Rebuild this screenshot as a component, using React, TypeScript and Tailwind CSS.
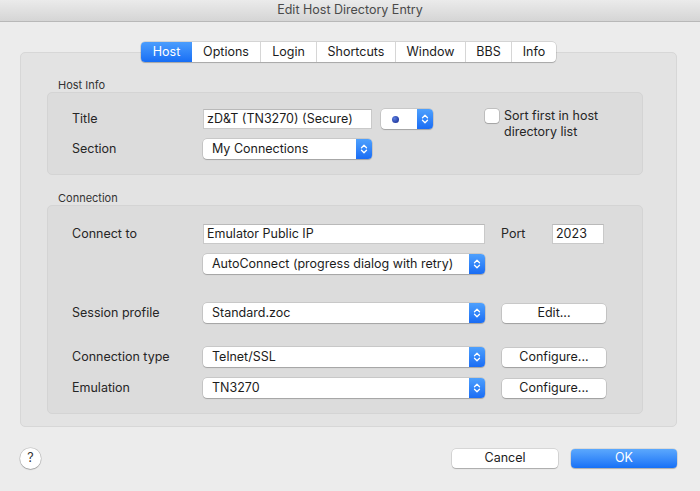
import React from 'react';

const FONT = { fontFamily: 'Inter, "Liberation Sans", Arial, sans-serif' };

const tabs = ['Host', 'Options', 'Login', 'Shortcuts', 'Window', 'BBS', 'Info'];
const tabWidths = ['w-[51px]', 'w-[68px]', 'w-[56px]', 'w-[79px]', 'w-[70px]', 'w-[46px]', 'w-[45px]'];

const Chevrons: React.FC = () => (
  <svg width="8" height="12" viewBox="0 0 8 12" fill="none">
    <path d="M1.5 4.8 L4 2.3 L6.5 4.8" stroke="white" strokeWidth="1.3" strokeLinecap="round" strokeLinejoin="round" />
    <path d="M1.5 7.2 L4 9.7 L6.5 7.2" stroke="white" strokeWidth="1.3" strokeLinecap="round" strokeLinejoin="round" />
  </svg>
);

const Popup: React.FC<{ value: string; width: string }> = ({ value, width }) => (
  <div
    className={`${width} h-[20px] flex bg-white rounded-[4px] shadow-[0_0_0_0.5px_rgba(0,0,0,0.18),0_1px_1px_rgba(0,0,0,0.18)] overflow-hidden`}
  >
    <div className="flex-1 flex items-center pl-[9px] text-[12.5px] text-[#1c1c1c] truncate">{value}</div>
    <div className="w-[16px] flex items-center justify-center bg-gradient-to-b from-[#4ea0fd] to-[#1a6cf4]">
      <Chevrons />
    </div>
  </div>
);

const TextField: React.FC<{ value: string; width: string }> = ({ value, width }) => (
  <div
    className={`${width} h-[20px] flex items-center bg-white border border-[#c9c9c9] border-t-[#b9b9b9] pl-[3px] text-[12.5px] text-[#1c1c1c]`}
  >
    {value}
  </div>
);

const PushButton: React.FC<{ label: string; width: string }> = ({ label, width }) => (
  <div
    className={`${width} h-[19px] flex items-center justify-center bg-white rounded-[4px] shadow-[0_0_0_0.5px_rgba(0,0,0,0.18),0_1px_1px_rgba(0,0,0,0.2)] text-[12.5px] text-[#1c1c1c]`}
  >
    {label}
  </div>
);

const Label: React.FC<{ children: React.ReactNode }> = ({ children }) => (
  <div className="w-[131px] text-[12.5px] text-[#262626]">{children}</div>
);

export default function App() {
  return (
    <div className="w-[700px] h-[491px] bg-[#ececec] flex flex-col overflow-hidden" style={FONT}>
      {/* title bar */}
      <div className="h-[22px] flex items-center justify-center bg-gradient-to-b from-[#ebebeb] to-[#d5d5d5] border-b border-[#b8b8b8] text-[12.5px] text-[#4a4a4a]">
        Edit Host Directory Entry
      </div>

      <div className="pl-[20px] pr-[23px] pt-[20px] flex flex-col">
        {/* tab strip */}
        <div className="relative z-10 flex justify-center">
          <div className="flex h-[20px] bg-white rounded-[4px] shadow-[0_0_0_0.5px_rgba(0,0,0,0.2),0_1px_1px_rgba(0,0,0,0.18)] overflow-hidden text-[12.5px] text-[#1c1c1c]">
            {tabs.map((t, i) => (
              <div
                key={t}
                className={`${tabWidths[i]} flex items-center justify-center ${
                  i === 0
                    ? 'bg-gradient-to-b from-[#4b9dfd] to-[#176ef5] text-white'
                    : 'border-l border-[#d6d6d6]'
                } ${i === 1 ? 'border-l-0' : ''}`}
              >
                {t}
              </div>
            ))}
          </div>
        </div>

        {/* tab panel */}
        <div className="-mt-[10px] h-[375px] bg-[#e3e3e3] border border-[#d7d7d7] rounded-[5px] pl-[26px] pr-[33px] pt-[26px]">
          <div className="pl-[11px] h-[13px] text-[11px] leading-[13px] text-[#333]">Host Info</div>

          {/* Host info group */}
          <div className="h-[83px] bg-[#dcdcdc] border border-[#d4d4d4] rounded-[5px] flex pl-[24px] pt-[16px]">
            <div className="flex flex-col gap-[10px]">
              <div className="flex items-center">
                <Label>Title</Label>
                <TextField value="zD&T (TN3270) (Secure)" width="w-[169px]" />
                <div className="ml-[9px] w-[52px] h-[20px] flex bg-white rounded-[4px] shadow-[0_0_0_0.5px_rgba(0,0,0,0.18),0_1px_1px_rgba(0,0,0,0.18)] overflow-hidden">
                  <div className="flex-1 flex items-center pl-[11px]">
                    <div className="w-[7px] h-[7px] rounded-full bg-[radial-gradient(circle_at_35%_35%,#5a7de0,#10248a)]" />
                  </div>
                  <div className="w-[16px] flex items-center justify-center bg-gradient-to-b from-[#4ea0fd] to-[#1a6cf4]">
                    <Chevrons />
                  </div>
                </div>
              </div>
              <div className="flex items-center">
                <Label>Section</Label>
                <Popup value="My Connections" width="w-[169px]" />
              </div>
            </div>
            <div className="ml-[52px] flex items-start">
              <div className="w-[14px] h-[14px] bg-white rounded-[3px] shadow-[0_0_0_0.5px_rgba(0,0,0,0.25),0_1px_1px_rgba(0,0,0,0.15)]" />
              <div className="ml-[5px] -mt-[1px] text-[12.5px] leading-[16px] text-[#262626]">
                Sort first in host
                <br />
                directory list
              </div>
            </div>
          </div>

          <div className="mt-[17px] pl-[11px] h-[13px] text-[11px] leading-[13px] text-[#333]">Connection</div>

          {/* Connection group */}
          <div className="h-[209px] bg-[#dcdcdc] border border-[#d4d4d4] rounded-[5px] pl-[24px] pt-[18px] flex flex-col">
            <div className="flex items-center">
              <Label>Connect to</Label>
              <TextField value="Emulator Public IP" width="w-[282px]" />
              <div className="ml-[16px] w-[51px] text-[12.5px] text-[#262626]">Port</div>
              <TextField value="2023" width="w-[52px]" />
            </div>
            <div className="mt-[10px] flex items-center">
              <div className="w-[131px]" />
              <Popup value="AutoConnect (progress dialog with retry)" width="w-[282px]" />
            </div>
            <div className="mt-[29px] flex items-center">
              <Label>Session profile</Label>
              <Popup value="Standard.zoc" width="w-[282px]" />
              <div className="ml-[17px]">
                <PushButton label="Edit..." width="w-[104px]" />
              </div>
            </div>
            <div className="mt-[24px] flex items-center">
              <Label>Connection type</Label>
              <Popup value="Telnet/SSL" width="w-[282px]" />
              <div className="ml-[17px]">
                <PushButton label="Configure..." width="w-[104px]" />
              </div>
            </div>
            <div className="mt-[11px] flex items-center">
              <Label>Emulation</Label>
              <Popup value="TN3270" width="w-[282px]" />
              <div className="ml-[17px]">
                <PushButton label="Configure..." width="w-[104px]" />
              </div>
            </div>
          </div>
        </div>

        {/* bottom buttons */}
        <div className="mt-[21px] flex items-center">
          <div className="w-[21px] h-[21px] rounded-full bg-white shadow-[0_0_0_0.5px_rgba(0,0,0,0.2),0_1px_1px_rgba(0,0,0,0.2)] flex items-center justify-center text-[12.5px] text-[#333]">
            ?
          </div>
          <div className="flex-1" />
          <PushButton label="Cancel" width="w-[106px]" />
          <div className="ml-[13px] w-[106px] h-[19px] rounded-[4px] bg-gradient-to-b from-[#5ba8fd] to-[#1670f6] shadow-[0_0_0_0.5px_rgba(0,0,0,0.15),0_1px_1px_rgba(0,0,0,0.2)] flex items-center justify-center text-[12.5px] text-white">
            OK
          </div>
        </div>
      </div>
    </div>
  );
}
